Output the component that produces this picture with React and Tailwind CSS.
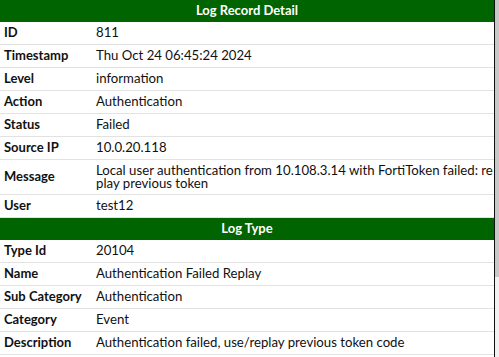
import React from 'react';

// Log record fields
const recordRows = [
  { label: 'ID', value: '811' },
  { label: 'Timestamp', value: 'Thu Oct 24 06:45:24 2024' },
  { label: 'Level', value: 'information' },
  { label: 'Action', value: 'Authentication' },
  { label: 'Status', value: 'Failed' },
  { label: 'Source IP', value: '10.0.20.118' },
  {
    label: 'Message',
    value: (
      <>
        Local user authentication from 10.108.3.14 with FortiToken failed: re
        <br />
        play previous token
      </>
    ),
    multi: true,
  },
  { label: 'User', value: 'test12' },
];

const typeRows = [
  { label: 'Type Id', value: '20104' },
  { label: 'Name', value: 'Authentication Failed Replay' },
  { label: 'Sub Category', value: 'Authentication' },
  { label: 'Category', value: 'Event' },
  { label: 'Description', value: 'Authentication failed, use/replay previous token code' },
];

function SectionHeader({ title }) {
  return (
    <div className="h-[22px] bg-[#006400] text-white font-bold text-[13px] flex items-center justify-center">
      {title}
    </div>
  );
}

function Row({ label, value, multi }) {
  return (
    <div className={`flex border-b border-[#e2e2e2] ${multi ? 'h-[35px]' : 'h-[23px]'}`}>
      <div className="w-[92px] shrink-0 pl-1 font-bold text-[13px] text-[#111] flex items-center">
        {label}
      </div>
      <div
        className={`flex-1 pl-1 text-[13.2px] text-[#111] flex items-center whitespace-nowrap ${
          multi ? 'leading-[13px]' : ''
        }`}
      >
        <span>{value}</span>
      </div>
    </div>
  );
}

export default function App() {
  return (
    <div
      className="w-[499px] h-[357px] overflow-hidden flex bg-white"
      style={{ fontFamily: 'Lato, "Liberation Sans", sans-serif' }}
    >
      <div className="w-[494px] shrink-0">
        <SectionHeader title="Log Record Detail" />
        {recordRows.map((r) => (
          <Row key={r.label} {...r} />
        ))}
        <SectionHeader title="Log Type" />
        {typeRows.map((r) => (
          <Row key={r.label} {...r} />
        ))}
      </div>
      <div className="w-px bg-[#111] shrink-0" />
      <div className="flex-1 bg-[#f1f1f1] flex flex-col">
        <div className="h-[277px] bg-[#c8c8c8]" />
      </div>
    </div>
  );
}
